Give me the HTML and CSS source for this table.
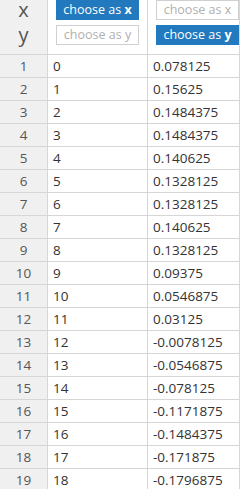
FILE: index.html
```html
<!DOCTYPE html>
<html>
<head>
<meta charset="utf-8">
<link rel="stylesheet" href="styles.css">
</head>
<body>
<div class="grid">
  <div class="cell head-idx"><span class="axis">x</span><span class="axis">y</span></div>
  <div class="cell head"><button class="btn on">choose as <b>x</b></button><button class="btn off">choose as y</button></div>
  <div class="cell head"><button class="btn off">choose as x</button><button class="btn on">choose as <b>y</b></button></div>

  <div class="cell idx">1</div><div class="cell">0</div><div class="cell">0.078125</div>
  <div class="cell idx">2</div><div class="cell">1</div><div class="cell">0.15625</div>
  <div class="cell idx">3</div><div class="cell">2</div><div class="cell">0.1484375</div>
  <div class="cell idx">4</div><div class="cell">3</div><div class="cell">0.1484375</div>
  <div class="cell idx">5</div><div class="cell">4</div><div class="cell">0.140625</div>
  <div class="cell idx">6</div><div class="cell">5</div><div class="cell">0.1328125</div>
  <div class="cell idx">7</div><div class="cell">6</div><div class="cell">0.1328125</div>
  <div class="cell idx">8</div><div class="cell">7</div><div class="cell">0.140625</div>
  <div class="cell idx">9</div><div class="cell">8</div><div class="cell">0.1328125</div>
  <div class="cell idx">10</div><div class="cell">9</div><div class="cell">0.09375</div>
  <div class="cell idx">11</div><div class="cell">10</div><div class="cell">0.0546875</div>
  <div class="cell idx">12</div><div class="cell">11</div><div class="cell">0.03125</div>
  <div class="cell idx">13</div><div class="cell">12</div><div class="cell">-0.0078125</div>
  <div class="cell idx">14</div><div class="cell">13</div><div class="cell">-0.0546875</div>
  <div class="cell idx">15</div><div class="cell">14</div><div class="cell">-0.078125</div>
  <div class="cell idx">16</div><div class="cell">15</div><div class="cell">-0.1171875</div>
  <div class="cell idx">17</div><div class="cell">16</div><div class="cell">-0.1484375</div>
  <div class="cell idx">18</div><div class="cell">17</div><div class="cell">-0.171875</div>
  <div class="cell idx">19</div><div class="cell">18</div><div class="cell">-0.1796875</div>
</div>
</body>
</html>
```
FILE: styles.css
```css
html, body {
  margin: 0;
  padding: 0;
  background: #fff;
}
body {
  font-family: "Open Sans", "Noto Sans", sans-serif;
  color: #333;
  overflow: hidden;
}
.grid {
  display: grid;
  grid-template-columns: 48px 100px 1fr;
  grid-auto-rows: 23px;
  grid-template-rows: 55px;
}
.cell {
  box-sizing: border-box;
  border-right: 1px solid #d6d6d6;
  border-bottom: 1px solid #d6d6d6;
  font-size: 13.5px;
  line-height: 22px;
  padding-left: 5px;
  white-space: nowrap;
}
.idx {
  background: #f0f0f0;
  text-align: center;
  padding: 0;
  color: #555;
}
.head-idx {
  background: #f0f0f0;
  display: flex;
  flex-direction: column;
  align-items: center;
  gap: 5px;
  padding: 0;
}
.axis {
  font-size: 20px;
  line-height: 20px;
  height: 20px;
  color: #555;
}
.head {
  display: flex;
  flex-direction: column;
  align-items: flex-start;
  gap: 5px;
  padding: 0 0 0 8px;
}
.btn {
  box-sizing: border-box;
  width: 83px;
  height: 20px;
  margin: 0;
  padding: 0 0 1px;
  font-family: "Open Sans", "Noto Sans", sans-serif;
  font-size: 12.5px;
  line-height: 17px;
  border-radius: 0;
  text-align: center;
  white-space: nowrap;
}
.btn b {
  font-weight: 700;
}
.on {
  background: #2279bd;
  border: 1px solid #2279bd;
  color: #fff;
}
.off {
  background: #fff;
  border: 1px solid #d0d0d0;
  color: #b0b0b0;
}
```
